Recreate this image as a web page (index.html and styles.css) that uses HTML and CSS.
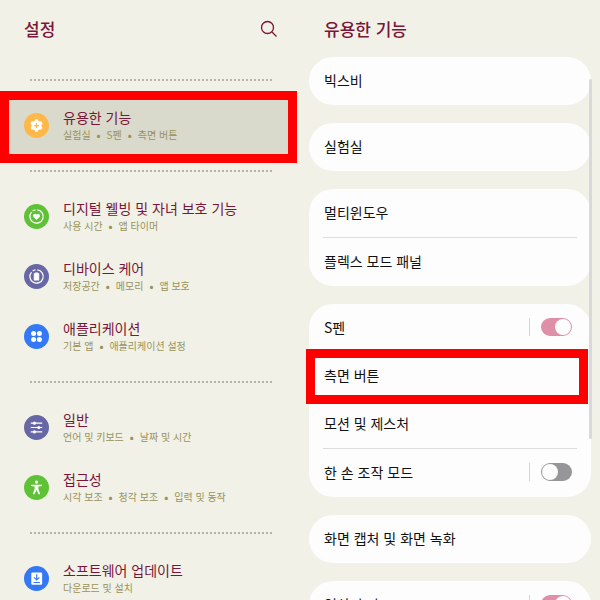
FILE: index.html
```html
<!DOCTYPE html>
<html lang="ko">
<head>
  <meta charset="UTF-8">
  <meta name="viewport" content="width=device-width, initial-scale=1">
  <title>설정</title>
  <link rel="stylesheet" href="styles.css">
</head>
<body>

  <main class="screens">
    <section class="panel settings">
      <header class="panel-header">
        <h1>설정</h1>
        <button class="search-btn" type="button" aria-label="검색">
          <svg viewBox="0 0 18 18" width="18" height="18"><circle cx="7.5" cy="7.5" r="6"/><path d="M12 12l4.5 4.5"/></svg>
        </button>
      </header>

      <nav>
        <div class="group">
          <a class="item selected" href="#">
            <svg class="icon" viewBox="0 0 24 24">
              <circle cx="12" cy="12" r="12" fill="#fdb849"/>
              <g fill="#fff">
                <circle cx="12" cy="12" r="4.7"/>
                <circle cx="12" cy="7.6" r="1.8"/><circle cx="12" cy="16.4" r="1.8"/>
                <circle cx="8.2" cy="9.8" r="1.8"/><circle cx="15.8" cy="9.8" r="1.8"/>
                <circle cx="8.2" cy="14.2" r="1.8"/><circle cx="15.8" cy="14.2" r="1.8"/>
              </g>
              <path d="M12 9.6v4.8M9.6 12h4.8" stroke="#fdb849" stroke-width="1.2"/>
            </svg>
            <span class="text">
              <span class="name">유용한 기능</span>
              <span class="desc">실험실<i>•</i>S펜<i>•</i>측면 버튼</span>
            </span>
          </a>
        </div>

        <div class="group">
          <a class="item" href="#">
            <svg class="icon" viewBox="0 0 24 24">
              <circle cx="12" cy="12" r="12" fill="#5fc236"/>
              <path d="M12.8 5.6A6.4 6.4 0 1 1 7.2 7.8M8.3 6.8A6.4 6.4 0 0 1 11 5.7" fill="none" stroke="#fff" stroke-width="1.2"/>
              <path d="M12 15.4l-3-3a1.8 1.8 0 0 1 3-2.2 1.8 1.8 0 0 1 3 2.2z" fill="#fff"/>
            </svg>
            <span class="text">
              <span class="name">디지털 웰빙 및 자녀 보호 기능</span>
              <span class="desc">사용 시간<i>•</i>앱 타이머</span>
            </span>
          </a>
          <a class="item" href="#">
            <svg class="icon" viewBox="0 0 24 24">
              <circle cx="12" cy="12" r="12" fill="#6767a5"/>
              <path d="M12.8 5.6A6.4 6.4 0 1 1 7.2 7.8M8.3 6.8A6.4 6.4 0 0 1 11 5.7" fill="none" stroke="#fff" stroke-width="1.2"/>
              <path d="M10.8 8.5h2.4v.6h1.1v6.4H9.7V9.1h1.1z" fill="#fff" stroke="#fff" stroke-width=".6" stroke-linejoin="round"/>
            </svg>
            <span class="text">
              <span class="name">디바이스 케어</span>
              <span class="desc">저장공간<i>•</i>메모리<i>•</i>앱 보호</span>
            </span>
          </a>
          <a class="item" href="#">
            <svg class="icon" viewBox="0 0 24 24">
              <circle cx="12" cy="12" r="12" fill="#3478f6"/>
              <g fill="#fff">
                <circle cx="9.2" cy="9.2" r="2.4"/><circle cx="14.8" cy="9.2" r="2.4"/>
                <circle cx="9.2" cy="14.8" r="2.4"/><circle cx="14.8" cy="14.8" r="2.4"/>
              </g>
            </svg>
            <span class="text">
              <span class="name">애플리케이션</span>
              <span class="desc">기본 앱<i>•</i>애플리케이션 설정</span>
            </span>
          </a>
        </div>

        <div class="group">
          <a class="item" href="#">
            <svg class="icon" viewBox="0 0 24 24">
              <circle cx="12" cy="12" r="12" fill="#6767a5"/>
              <path d="M6.5 7.8h11M6.5 12h11M6.5 16.2h11" stroke="#fff" stroke-width="1.1"/>
              <g fill="#fff"><circle cx="10" cy="7.8" r="1.5"/><circle cx="14.2" cy="12" r="1.5"/><circle cx="10" cy="16.2" r="1.5"/></g>
            </svg>
            <span class="text">
              <span class="name">일반</span>
              <span class="desc">언어 및 키보드<i>•</i>날짜 및 시간</span>
            </span>
          </a>
          <a class="item" href="#">
            <svg class="icon" viewBox="0 0 24 24">
              <circle cx="12" cy="12" r="12" fill="#5fc236"/>
              <circle cx="12" cy="6.8" r="1.6" fill="#fff"/>
              <path d="M6.8 9.3h10.4v1.2l-3.4.5v2.5l1.7 4.7-1.3.5-2.2-4.3-2.2 4.3-1.3-.5 1.7-4.7V11l-3.4-.5z" fill="#fff"/>
            </svg>
            <span class="text">
              <span class="name">접근성</span>
              <span class="desc">시각 보조<i>•</i>청각 보조<i>•</i>입력 및 동작</span>
            </span>
          </a>
        </div>

        <div class="group">
          <a class="item" href="#">
            <svg class="icon" viewBox="0 0 24 24">
              <circle cx="12" cy="12" r="12" fill="#3478f6"/>
              <rect x="7" y="6.3" width="10.4" height="11.8" rx="1.2" fill="#fff"/>
              <path d="M12.2 8v5.2M9.7 11l2.5 2.4 2.5-2.4M9.2 15.8h6" fill="none" stroke="#3478f6" stroke-width="1.1"/>
            </svg>
            <span class="text">
              <span class="name">소프트웨어 업데이트</span>
              <span class="desc">다운로드 및 설치</span>
            </span>
          </a>
        </div>
      </nav>
    </section>

    <section class="panel features">
      <header class="panel-header">
        <h2>유용한 기능</h2>
      </header>

      <div class="cards">
        <div class="card"><a class="row" href="#">빅스비</a></div>
        <div class="card"><a class="row" href="#">실험실</a></div>
        <div class="card">
          <a class="row" href="#">멀티윈도우</a>
          <hr>
          <a class="row" href="#">플렉스 모드 패널</a>
        </div>
        <div class="card">
          <div class="row">
            <label for="spen">S펜</label>
            <input class="switch" id="spen" type="checkbox" checked>
          </div>
          <a class="row marked" href="#">측면 버튼</a>
          <a class="row" href="#">모션 및 제스처</a>
          <hr>
          <div class="row">
            <label for="onehand">한 손 조작 모드</label>
            <input class="switch" id="onehand" type="checkbox">
          </div>
        </div>
        <div class="card"><a class="row" href="#">화면 캡처 및 화면 녹화</a></div>
        <div class="card">
          <div class="row">
            <label for="effects">영상 효과</label>
            <input class="switch" id="effects" type="checkbox" checked>
          </div>
        </div>
      </div>
      <div class="scrollbar"></div>
    </section>
  </main>

</body>
</html>
```
FILE: styles.css
```css
* {
  box-sizing: border-box;
}

body {
  margin: 0;
  font-family: "Noto Sans CJK KR", sans-serif;
  background: #f1f1e7;
  color: #111;
}

a {
  color: inherit;
  text-decoration: none;
}

.screens {
  display: grid;
  grid-template-columns: 1fr 1fr;
  height: 100vh;
  overflow: hidden;
}

.panel {
  position: relative;
  min-width: 0;
}

.panel-header {
  display: flex;
  align-items: center;
  justify-content: space-between;
  height: 57px;
  padding: 0 22px 0 24px;
}

h1,
h2 {
  margin: 0;
  font-size: 17px;
  line-height: 24px;
  font-weight: 500;
  color: #7a1637;
}

.search-btn {
  display: flex;
  padding: 0;
  border: none;
  background: none;
  cursor: pointer;
}

.search-btn svg {
  fill: none;
  stroke: #7a1637;
  stroke-width: 1.3;
}

/* left list */
.settings nav {
  padding-top: 22px;
}

.group {
  padding-bottom: 15px;
}

.group::before {
  content: "";
  display: block;
  height: 2px;
  margin: 0 26px 14px 30px;
  background: repeating-linear-gradient(to right, #b5b4a5 0 2px, transparent 2px 4px);
}

.item {
  display: flex;
  align-items: center;
  gap: 14px;
  height: 60px;
  padding-left: 24px;
}

.icon {
  width: 25px;
  height: 25px;
  flex: none;
}

.text {
  display: flex;
  flex-direction: column;
}

.name {
  font-size: 14px;
  line-height: 19px;
  color: #7a1637;
}

.desc {
  font-size: 10px;
  line-height: 16px;
  color: #99915a;
}

.desc i {
  margin: 0 6px;
  font-style: normal;
  font-weight: 900;
}

.selected {
  position: relative;
  z-index: 0;
}

.selected::after {
  content: "";
  position: absolute;
  inset: -4px 3px -8px 0;
  z-index: -1;
  border: 9px solid #f00;
  background: #d9d9cc;
}

/* right list */
.cards {
  display: flex;
  flex-direction: column;
  gap: 18px;
  padding: 0 9px;
}

.card {
  border-radius: 24px;
  background: #fdfdfd;
}

.row {
  display: flex;
  align-items: center;
  justify-content: space-between;
  height: 48px;
  padding: 0 15px 2px;
  font-size: 14px;
}

hr {
  height: 1px;
  margin: 0 14px;
  border: none;
  background: #ddd;
}

.marked {
  position: relative;
}

.marked::after {
  content: "";
  position: absolute;
  inset: -3px 3px -4px -3px;
  border: 9px solid #f00;
}

.switch {
  appearance: none;
  position: relative;
  width: 31px;
  height: 18px;
  margin: 0 4px 0 0;
  border-radius: 9px;
  background: #969698;
  cursor: pointer;
}

.switch::before {
  content: "";
  position: absolute;
  top: 1px;
  left: 1px;
  width: 16px;
  height: 16px;
  border-radius: 50%;
  background: #fdfdfd;
}

.switch:checked {
  background: #df90a9;
}

.switch:checked::before {
  left: 14px;
}

/* divider in front of the switch */
.switch::after {
  content: "";
  position: absolute;
  top: 0;
  left: -12px;
  width: 1px;
  height: 18px;
  background: #d5d5d5;
}

.scrollbar {
  position: absolute;
  top: 79px;
  right: 8px;
  width: 3px;
  height: 60vh;
  border-radius: 2px;
  background: #d9d9dc;
}
```
